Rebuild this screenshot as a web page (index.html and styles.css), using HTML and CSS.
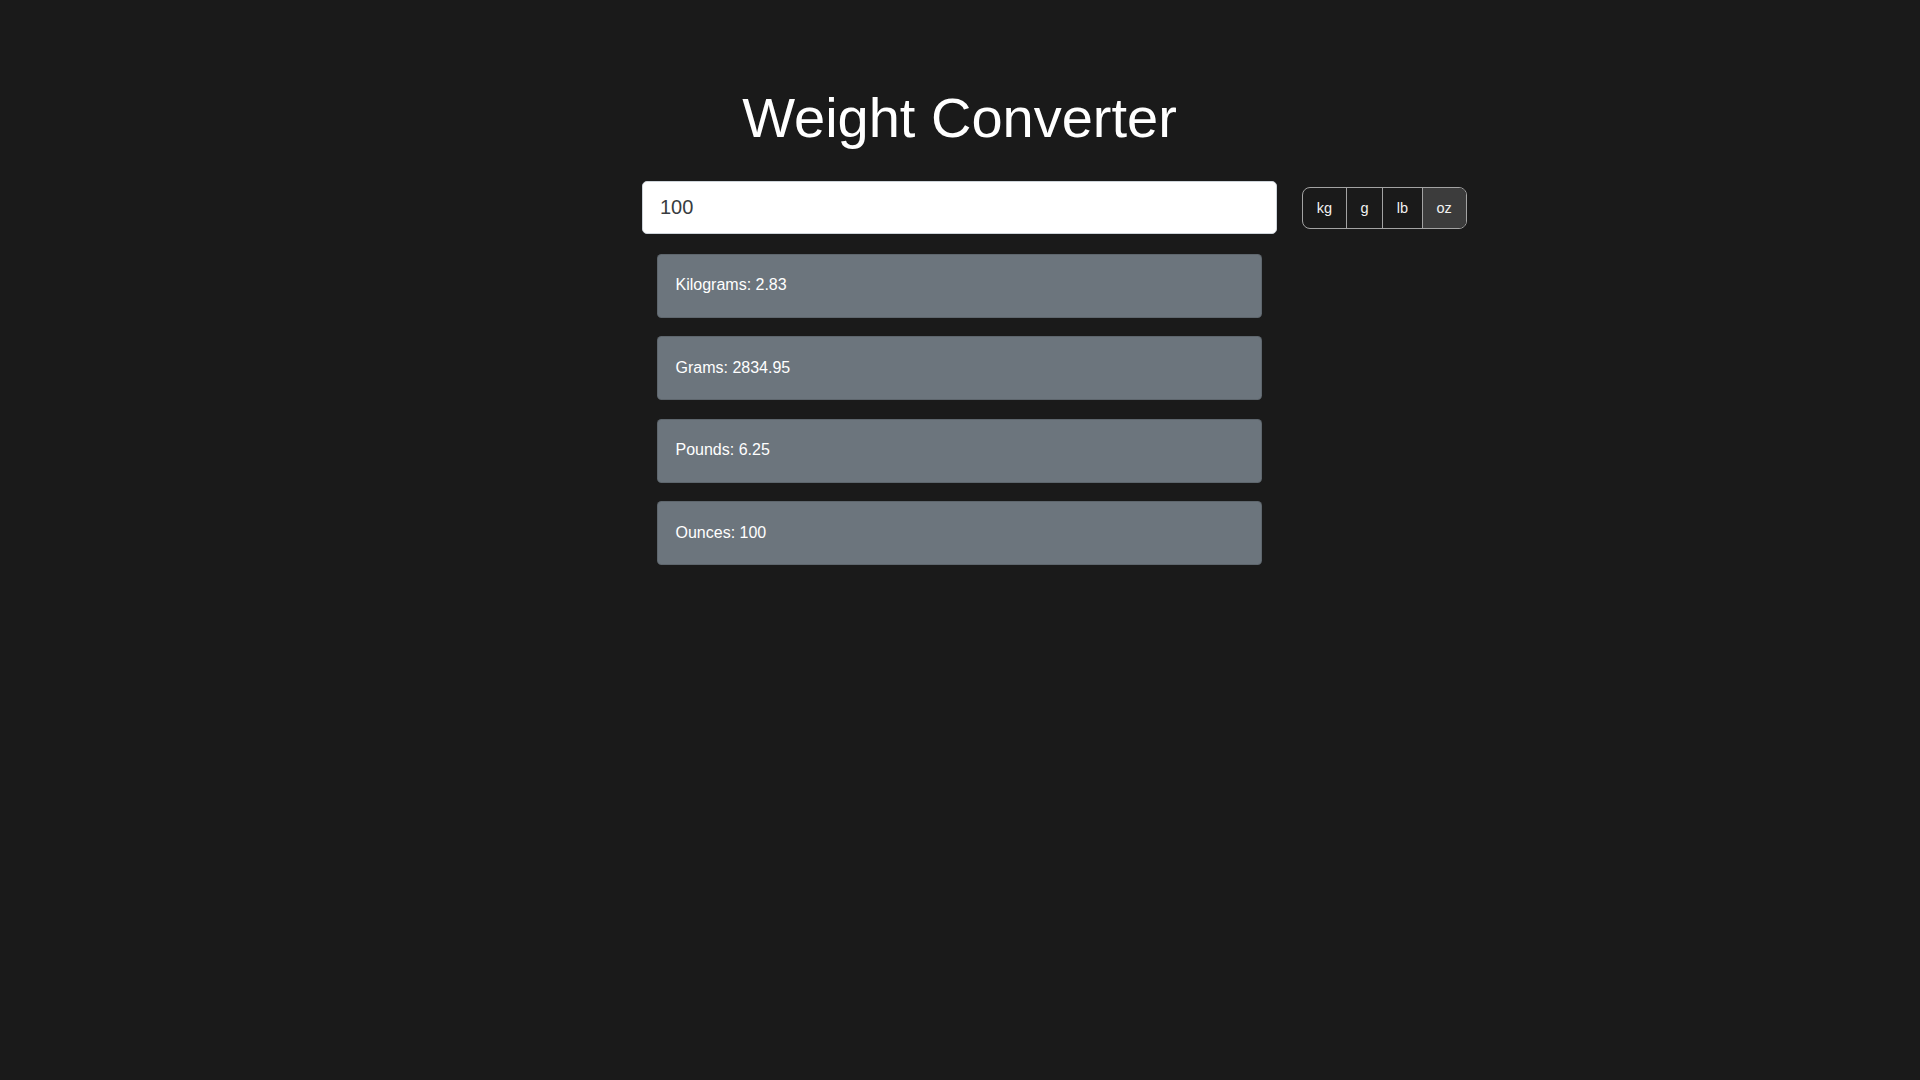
FILE: index.html
```html
<!DOCTYPE html>
<html lang="en">
<head>
<meta charset="utf-8">
<title>Weight Converter</title>
<link rel="stylesheet" href="styles.css">
</head>
<body>
<main class="app">
  <h1 class="title">Weight Converter</h1>
  <div class="input-row">
    <div class="spacer"></div>
    <input class="weight-input" type="text" value="100">
    <div class="unit-group">
      <button class="unit-btn" type="button">kg</button>
      <button class="unit-btn" type="button">g</button>
      <button class="unit-btn" type="button">lb</button>
      <button class="unit-btn active" type="button">oz</button>
    </div>
  </div>
  <section class="results">
    <div class="result-card">Kilograms: 2.83</div>
    <div class="result-card">Grams: 2834.95</div>
    <div class="result-card">Pounds: 6.25</div>
    <div class="result-card">Ounces: 100</div>
  </section>
</main>
</body>
</html>
```

FILE: styles.css
```css
* {
  box-sizing: border-box;
}

html, body {
  margin: 0;
  padding: 0;
}

body {
  background: #1a1a1a;
  font-family: "Liberation Sans", Arial, sans-serif;
  color: #ffffff;
  min-height: 1080px;
}

.app {
  padding-top: 84px;
  padding-right: 1px;
}

.title {
  margin: 0;
  font-size: 56px;
  line-height: 67px;
  font-weight: normal;
  text-align: center;
  color: #ffffff;
}

.input-row {
  margin-top: 30px;
  display: grid;
  grid-template-columns: 1fr 635px 1fr;
  align-items: center;
}

.weight-input {
  width: 635px;
  height: 53px;
  border: 1px solid #ced4da;
  border-radius: 5px;
  padding: 0 17px;
  font-family: "Liberation Sans", Arial, sans-serif;
  font-size: 20px;
  color: #383c40;
  background: #ffffff;
  outline: none;
}

.unit-group {
  justify-self: start;
  margin-left: 25px;
  display: flex;
  height: 42px;
  border: 1px solid #a3a3a3;
  border-radius: 8px;
  overflow: hidden;
}

.unit-btn {
  background: transparent;
  border: none;
  border-left: 1px solid #a3a3a3;
  color: #f2f2f2;
  font-family: "Liberation Sans", Arial, sans-serif;
  font-size: 14.5px;
  padding: 0 13.7px;
  height: 40px;
  line-height: 40px;
  cursor: pointer;
}

.unit-btn:first-child {
  border-left: none;
}

.unit-btn.active {
  background: #3c3c3c;
}

.results {
  width: 605px;
  margin: 19.5px auto 0;
  display: flex;
  flex-direction: column;
  gap: 18.6px;
}

.result-card {
  height: 64px;
  display: flex;
  align-items: center;
  padding: 0 17.5px 1px;
  background: #6c757d;
  border: 1px solid rgba(0, 0, 0, 0.125);
  border-radius: 4.5px;
  font-size: 16px;
  color: #ffffff;
}
```
